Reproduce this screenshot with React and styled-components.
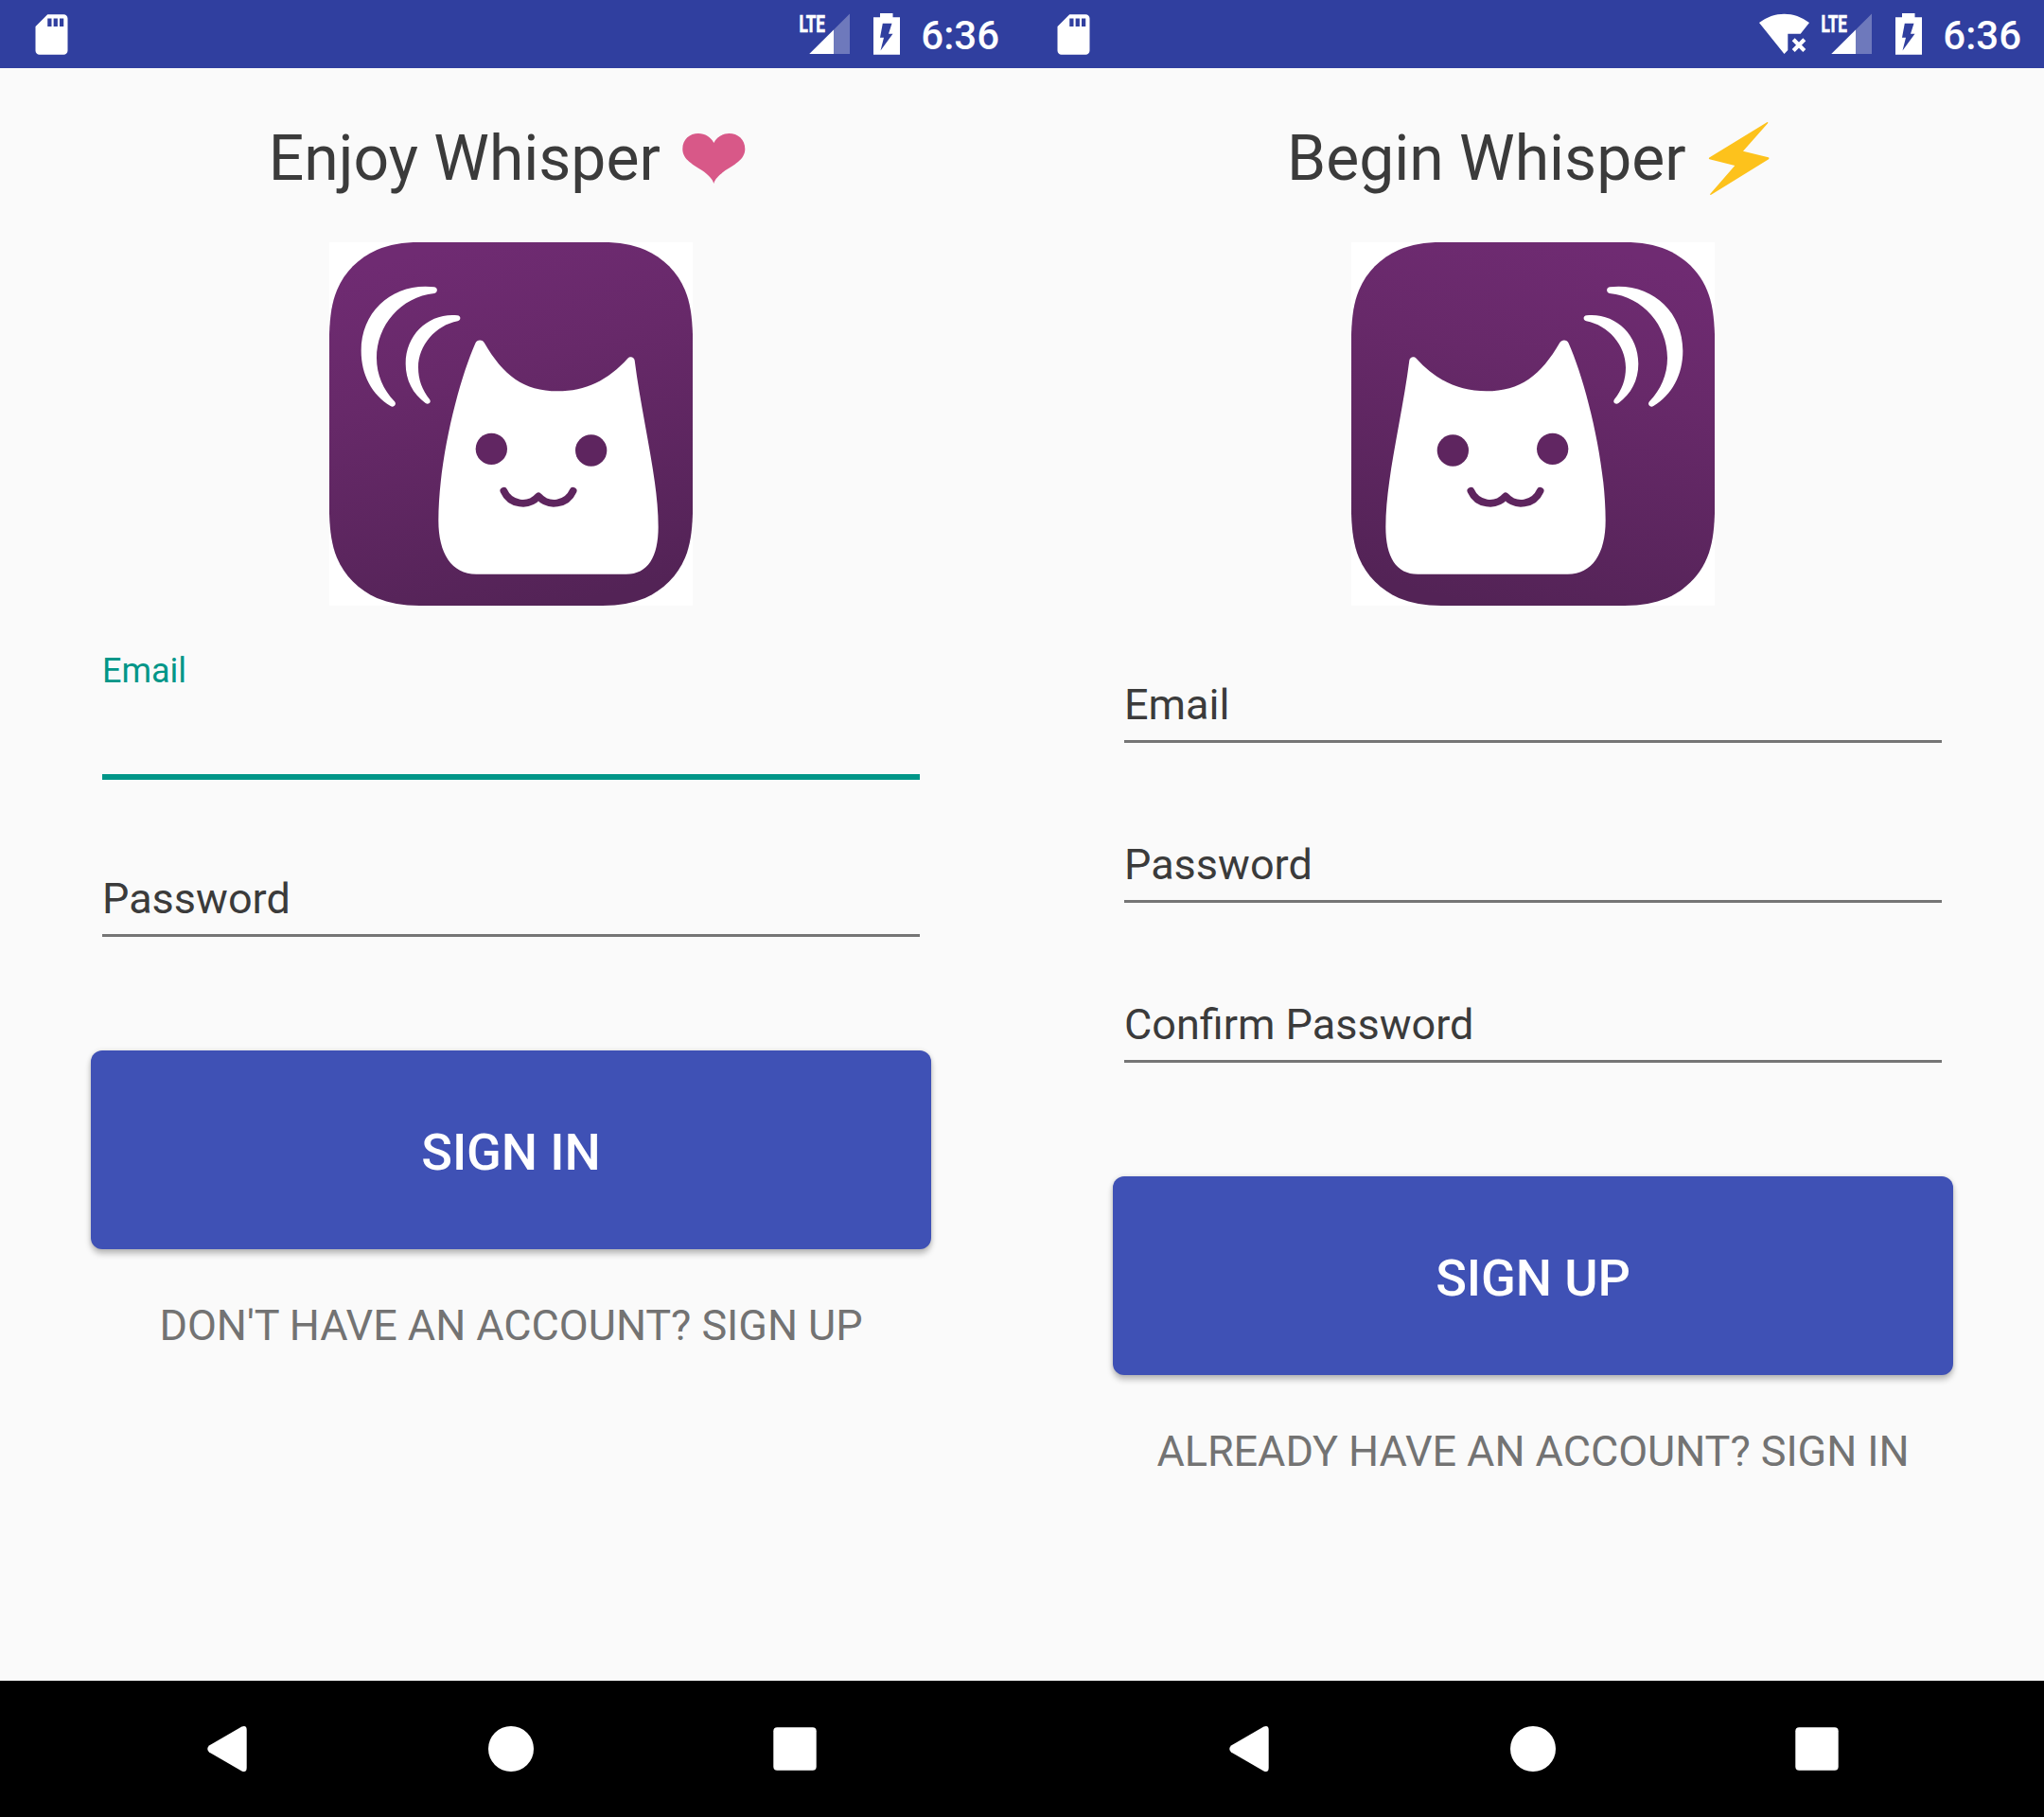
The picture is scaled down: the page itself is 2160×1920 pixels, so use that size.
import React from "react";
import styled, { createGlobalStyle } from "styled-components";

const GlobalStyle = createGlobalStyle`
  * { box-sizing: border-box; }
  body { margin: 0; background: #fafafa; }
`;

const Page = styled.div`
  display: flex;
  width: 2160px;
  height: 1920px;
  font-family: Roboto, "Liberation Sans", sans-serif;
`;

const Screen = styled.section`
  display: flex;
  flex-direction: column;
  width: 1080px;
  height: 1920px;
  background: #fafafa;
`;

const StatusBar = styled.header`
  display: flex;
  align-items: center;
  justify-content: space-between;
  height: 72px;
  padding: 0 24px 0 28.5px;
  background: #303f9f;
`;

const StatusGroup = styled.div`
  display: flex;
  align-items: center;
`;

const Clock = styled.time`
  height: 72px;
  padding: 1px 0 0 20px;
  color: #fff;
  font-size: 42px;
  font-weight: 500;
  line-height: 73px;
`;

const Content = styled.main`
  flex: 1;
  display: flex;
  flex-direction: column;
  align-items: center;
  padding: 48px 96px 0;
`;

const Title = styled.h1`
  display: flex;
  align-items: center;
  justify-content: center;
  gap: 7px;
  height: 94px;
  margin: 0;
  color: #3b3b3b;
  font-size: 66px;
  font-weight: 400;
  line-height: 94px;
  white-space: pre;
`;

const TitleText = styled.span`
  padding-top: 2px;
`;

const Logo = styled.svg`
  display: block;
  flex: none;
  width: 384px;
  height: 384px;
  margin-top: 42px;
  transform: ${(p) => (p.$mirrored ? "scaleX(-1)" : "none")};
`;

const Fields = styled.form`
  display: flex;
  flex-direction: column;
  width: 864px;
  padding-top: 48px;
`;

const Field = styled.label`
  display: flex;
  flex-direction: column;
  justify-content: space-between;
  height: ${(p) => (p.$focused ? 136 : p.$afterFocus ? 166 : 169)}px;
  padding-top: ${(p) => (p.$focused ? 0 : p.$afterFocus ? 99 : 31)}px;
  border-bottom: ${(p) => (p.$focused ? "6px solid #009688" : "3px solid #757575")};
  color: ${(p) => (p.$focused ? "#009688" : "#3b3b3b")};
  font-size: ${(p) => (p.$focused ? 36 : 45)}px;
  line-height: ${(p) => (p.$focused ? 42 : 53)}px;
`;

const PlainField = styled(Field)`
  height: ${(p) => (p.$first ? 97 : 169)}px;
  padding-top: ${(p) => (p.$first ? 30 : 102)}px;
`;

const Action = styled.button`
  width: 888px;
  height: 210px;
  margin: 120px 0 0;
  padding: 6px 0 0;
  border: 0;
  border-radius: 12px;
  background: #3f51b5;
  box-shadow: 0 5px 6px rgba(0, 0, 0, 0.24), 0 0 5px rgba(0, 0, 0, 0.12);
  color: #fff;
  font-family: inherit;
  font-size: 54px;
  font-weight: 500;
  letter-spacing: -0.1px;
  line-height: 64px;
`;

const SwitchLink = styled.a`
  margin-top: 54px;
  color: #737373;
  font-size: 45px;
  letter-spacing: -0.05px;
  line-height: 53px;
  white-space: nowrap;
`;

const NavBar = styled.nav`
  display: flex;
  align-items: center;
  justify-content: space-between;
  height: 144px;
  padding: 0 210px;
  background: #000;
`;

const NavIcon = styled.svg`
  display: block;
  width: 60px;
  height: 60px;
  fill: #fff;
`;

const Icon = styled.svg`
  display: block;
  flex: none;
  overflow: visible;
`;

const SdCard = () => (
  <Icon width="51" height="51" viewBox="0 0 24 24" fill="#fff">
    <path d="M18 2h-8L4 8v12c0 1.1.9 2 2 2h12c1.1 0 2-.9 2-2V4c0-1.1-.9-2-2-2zm-6 6h-2V4h2v4zm3 0h-2V4h2v4zm3 0h-2V4h2v4z" />
  </Icon>
);

const WifiOff = () => (
  <Icon width="66" height="72" viewBox="0 0 66 72">
    <path fill="#fff" d="M0 24C16 11.5 37 11.5 53 24L43.7 35.8H30.3V53L26.5 57Z" />
    <path stroke="#fff" strokeWidth="4.2" d="M36.2 41.8L47.8 53.4M47.8 41.8L36.2 53.4" />
  </Icon>
);

const Signal = () => (
  <Icon width="56" height="72" viewBox="0 0 56 72" fill="#fff">
    <path opacity=".3" d="M53 14.5V57H10.3Z" />
    <path d="M36 31.5V57H10.3Z" />
    <text
      x="-0.6"
      y="33.5"
      fontSize="26.3"
      fontWeight="700"
      stroke="#fff"
      strokeWidth=".7"
      textLength="27.6"
      lengthAdjust="spacingAndGlyphs"
    >
      LTE
    </text>
  </Icon>
);

const Battery = () => (
  <Icon width="30" height="72" viewBox="0 0 30 72" fill="#fff">
    <path
      fillRule="evenodd"
      d="M7 14H20.5V18.3H28V57.8H0V18.3H7ZM9.8 24.8L7 39.8H11L7.5 53.5L20.5 35.8H16L19.5 24.8Z"
    />
  </Icon>
);

const Heart = () => (
  <Icon width="75" height="94" viewBox="0 0 75 94" fill="#d85888">
    <path d="M33.3 74C32 69 28 65.5 23 61.5C12 54 0.3 49 0.3 37.5C0.3 27 8 21 17 21C24 21 30.5 25 33.3 31C36 25 42.5 21 49.5 21C58.5 21 66.3 27 66.3 37.5C66.3 49 54.5 54 43.6 61.5C38.6 65.5 34.6 69 33.3 74Z" />
  </Icon>
);

const Bolt = () => (
  <Icon width="75" height="94" viewBox="0 0 75 94" fill="#fdc21c">
    <path d="M62.2 9.2C63 8.8 63.6 9.5 63.1 10.2L37 39.8L63.7 46.3C64.6 46.6 64.7 47.7 64 48.2L3.3 85.8C2.3 86.3 1.8 85.5 2.4 84.7L28.3 55L1.5 48.3C.7 48 .6 47 1.3 46.6Z" />
  </Icon>
);

const CatLogo = ({ mirrored, id }) => (
  <Logo viewBox="24 18 1152 1152" $mirrored={mirrored}>
    <defs>
      <linearGradient id={id} gradientUnits="userSpaceOnUse" x1="430" y1="20" x2="740" y2="1180">
        <stop offset="0" stopColor="#6f2b72" />
        <stop offset=".35" stopColor="#672969" />
        <stop offset="1" stopColor="#532356" />
      </linearGradient>
    </defs>
    <rect x="24" y="18" width="1152" height="1152" fill="#fff" />
    <path
      fill={`url(#${id})`}
      d="M24 310C26 250 32 210 48 170C72 112 117 68 175 42C215 26 255 18 310 18H890C945 18 985 26 1025 42C1083 68 1128 112 1152 170C1168 210 1174 250 1176 310V878C1174 938 1168 978 1152 1018C1128 1076 1083 1120 1025 1146C985 1162 945 1170 890 1170H310C255 1170 215 1162 175 1146C117 1120 72 1076 48 1018C32 978 26 938 24 878Z"
    />
    <g fill="#fff">
      <path d="M357 160C369 162 368 178 357 180C250 191 174 282 174 385C174 438 195 486 231 523C239 532 228 544 218 537C160 502 125 438 125 362C125 232 230 145 357 160Z" />
      <path d="M430 250C442 251 442 266 431 268C362 281 306 344 306 415C306 453 318 487 342 516C349 526 338 534 329 528C289 499 266 456 266 403C266 308 342 241 430 250Z" />
      <path d="M487 338C492 326 508 325 515 336C575 440 640 490 748 490C836 490 908 455 970 386C978 378 990 381 992 392C1016 580 1067 770 1067 920C1067 1015 1034 1070 965 1070H490C412 1070 370 1005 370 900C370 705 435 455 487 338Z" />
    </g>
    <circle cx="538" cy="673" r="50" fill="#612662" />
    <circle cx="854" cy="678" r="50" fill="#5e255f" />
    <path
      d="M577 806A66 66 0 0 0 687 823A66 66 0 0 0 797 806"
      fill="none"
      stroke="#5e255e"
      strokeWidth="23"
      strokeLinecap="round"
      strokeLinejoin="round"
    />
  </Logo>
);

const IconGap = styled.span`
  width: 22px;
`;

const Status = ({ wifi }) => (
  <StatusBar>
    <SdCard />
    <StatusGroup>
      {wifi && <WifiOff />}
      <Signal />
      <IconGap />
      <Battery />
      <Clock>6:36</Clock>
    </StatusGroup>
  </StatusBar>
);

const Navigation = () => (
  <NavBar>
    <NavIcon viewBox="0 0 60 60">
      <path d="M11 26.5L45.5 6.5Q50.7 4.5 50.7 10V50Q50.7 55.5 45.5 53.5L11 33.5Q7.5 30 11 26.5Z" />
    </NavIcon>
    <NavIcon viewBox="0 0 60 60">
      <circle cx="30" cy="30" r="24" />
    </NavIcon>
    <NavIcon viewBox="0 0 60 60">
      <rect x="7.3" y="7.3" width="45.4" height="45.4" rx="4" />
    </NavIcon>
  </NavBar>
);

export default function App() {
  return (
    <>
      <GlobalStyle />
      <Page>
        <Screen>
          <Status />
          <Content>
            <Title>
              <TitleText>{"Enjoy Whisper "}</TitleText>
              <Heart />
            </Title>
            <CatLogo id="logo-in" />
            <Fields>
              <Field $focused>Email</Field>
              <Field $afterFocus>Password</Field>
            </Fields>
            <Action>SIGN IN</Action>
            <SwitchLink>DON'T HAVE AN ACCOUNT? SIGN UP</SwitchLink>
          </Content>
          <Navigation />
        </Screen>
        <Screen>
          <Status wifi />
          <Content>
            <Title>
              <TitleText>{"Begin Whisper "}</TitleText>
              <Bolt />
            </Title>
            <CatLogo id="logo-up" mirrored />
            <Fields>
              <PlainField $first>Email</PlainField>
              <PlainField>Password</PlainField>
              <PlainField>Confirm Password</PlainField>
            </Fields>
            <Action>SIGN UP</Action>
            <SwitchLink>ALREADY HAVE AN ACCOUNT? SIGN IN</SwitchLink>
          </Content>
          <Navigation />
        </Screen>
      </Page>
    </>
  );
}
